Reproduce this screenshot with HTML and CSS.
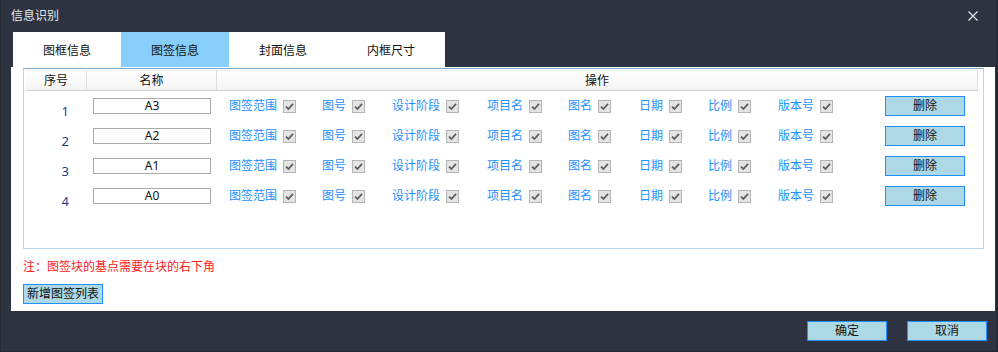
FILE: index.html
```html
<!DOCTYPE html>
<html lang="zh-CN">
<head>
<meta charset="utf-8">
<title>信息识别</title>
<link rel="stylesheet" href="styles.css">
</head>
<body>
<div class="window">
  <div class="titlebar">
    <span class="title">信息识别</span>
    <span class="close"><svg width="10" height="10" viewBox="0 0 10 10"><path d="M0.5 0.5 L9.5 9.5 M9.5 0.5 L0.5 9.5" stroke="#e4e7ec" stroke-width="1.2" fill="none"/></svg></span>
  </div>
  <div class="tabs">
    <div class="tab">图框信息</div>
    <div class="tab active">图签信息</div>
    <div class="tab">封面信息</div>
    <div class="tab">内框尺寸</div>
  </div>
  <div class="panel">
    <div class="gridbox">
      <div class="thead">
        <div class="th c-no">序号</div>
        <div class="th c-name">名称</div>
        <div class="th c-op">操作</div>
      </div>

      <div class="row">
        <div class="c-no num">1</div>
        <div class="c-name"><span class="input">A3</span></div>
        <div class="c-op ops">
          <span class="opt">图签范围<i class="cb"><svg width="13" height="13" viewBox="0 0 13 13"><path d="M3 6.6 L5.4 9 L10 3.8" stroke="#5e5e5e" stroke-width="1.8" fill="none"/></svg></i></span>
          <span class="opt">图号<i class="cb"><svg width="13" height="13" viewBox="0 0 13 13"><path d="M3 6.6 L5.4 9 L10 3.8" stroke="#5e5e5e" stroke-width="1.8" fill="none"/></svg></i></span>
          <span class="opt">设计阶段<i class="cb"><svg width="13" height="13" viewBox="0 0 13 13"><path d="M3 6.6 L5.4 9 L10 3.8" stroke="#5e5e5e" stroke-width="1.8" fill="none"/></svg></i></span>
          <span class="opt">项目名<i class="cb"><svg width="13" height="13" viewBox="0 0 13 13"><path d="M3 6.6 L5.4 9 L10 3.8" stroke="#5e5e5e" stroke-width="1.8" fill="none"/></svg></i></span>
          <span class="opt">图名<i class="cb"><svg width="13" height="13" viewBox="0 0 13 13"><path d="M3 6.6 L5.4 9 L10 3.8" stroke="#5e5e5e" stroke-width="1.8" fill="none"/></svg></i></span>
          <span class="opt">日期<i class="cb"><svg width="13" height="13" viewBox="0 0 13 13"><path d="M3 6.6 L5.4 9 L10 3.8" stroke="#5e5e5e" stroke-width="1.8" fill="none"/></svg></i></span>
          <span class="opt">比例<i class="cb"><svg width="13" height="13" viewBox="0 0 13 13"><path d="M3 6.6 L5.4 9 L10 3.8" stroke="#5e5e5e" stroke-width="1.8" fill="none"/></svg></i></span>
          <span class="opt">版本号<i class="cb"><svg width="13" height="13" viewBox="0 0 13 13"><path d="M3 6.6 L5.4 9 L10 3.8" stroke="#5e5e5e" stroke-width="1.8" fill="none"/></svg></i></span>
          <span class="btn del">删除</span>
        </div>
      </div>

      <div class="row">
        <div class="c-no num">2</div>
        <div class="c-name"><span class="input">A2</span></div>
        <div class="c-op ops">
          <span class="opt">图签范围<i class="cb"><svg width="13" height="13" viewBox="0 0 13 13"><path d="M3 6.6 L5.4 9 L10 3.8" stroke="#5e5e5e" stroke-width="1.8" fill="none"/></svg></i></span>
          <span class="opt">图号<i class="cb"><svg width="13" height="13" viewBox="0 0 13 13"><path d="M3 6.6 L5.4 9 L10 3.8" stroke="#5e5e5e" stroke-width="1.8" fill="none"/></svg></i></span>
          <span class="opt">设计阶段<i class="cb"><svg width="13" height="13" viewBox="0 0 13 13"><path d="M3 6.6 L5.4 9 L10 3.8" stroke="#5e5e5e" stroke-width="1.8" fill="none"/></svg></i></span>
          <span class="opt">项目名<i class="cb"><svg width="13" height="13" viewBox="0 0 13 13"><path d="M3 6.6 L5.4 9 L10 3.8" stroke="#5e5e5e" stroke-width="1.8" fill="none"/></svg></i></span>
          <span class="opt">图名<i class="cb"><svg width="13" height="13" viewBox="0 0 13 13"><path d="M3 6.6 L5.4 9 L10 3.8" stroke="#5e5e5e" stroke-width="1.8" fill="none"/></svg></i></span>
          <span class="opt">日期<i class="cb"><svg width="13" height="13" viewBox="0 0 13 13"><path d="M3 6.6 L5.4 9 L10 3.8" stroke="#5e5e5e" stroke-width="1.8" fill="none"/></svg></i></span>
          <span class="opt">比例<i class="cb"><svg width="13" height="13" viewBox="0 0 13 13"><path d="M3 6.6 L5.4 9 L10 3.8" stroke="#5e5e5e" stroke-width="1.8" fill="none"/></svg></i></span>
          <span class="opt">版本号<i class="cb"><svg width="13" height="13" viewBox="0 0 13 13"><path d="M3 6.6 L5.4 9 L10 3.8" stroke="#5e5e5e" stroke-width="1.8" fill="none"/></svg></i></span>
          <span class="btn del">删除</span>
        </div>
      </div>

      <div class="row">
        <div class="c-no num">3</div>
        <div class="c-name"><span class="input">A1</span></div>
        <div class="c-op ops">
          <span class="opt">图签范围<i class="cb"><svg width="13" height="13" viewBox="0 0 13 13"><path d="M3 6.6 L5.4 9 L10 3.8" stroke="#5e5e5e" stroke-width="1.8" fill="none"/></svg></i></span>
          <span class="opt">图号<i class="cb"><svg width="13" height="13" viewBox="0 0 13 13"><path d="M3 6.6 L5.4 9 L10 3.8" stroke="#5e5e5e" stroke-width="1.8" fill="none"/></svg></i></span>
          <span class="opt">设计阶段<i class="cb"><svg width="13" height="13" viewBox="0 0 13 13"><path d="M3 6.6 L5.4 9 L10 3.8" stroke="#5e5e5e" stroke-width="1.8" fill="none"/></svg></i></span>
          <span class="opt">项目名<i class="cb"><svg width="13" height="13" viewBox="0 0 13 13"><path d="M3 6.6 L5.4 9 L10 3.8" stroke="#5e5e5e" stroke-width="1.8" fill="none"/></svg></i></span>
          <span class="opt">图名<i class="cb"><svg width="13" height="13" viewBox="0 0 13 13"><path d="M3 6.6 L5.4 9 L10 3.8" stroke="#5e5e5e" stroke-width="1.8" fill="none"/></svg></i></span>
          <span class="opt">日期<i class="cb"><svg width="13" height="13" viewBox="0 0 13 13"><path d="M3 6.6 L5.4 9 L10 3.8" stroke="#5e5e5e" stroke-width="1.8" fill="none"/></svg></i></span>
          <span class="opt">比例<i class="cb"><svg width="13" height="13" viewBox="0 0 13 13"><path d="M3 6.6 L5.4 9 L10 3.8" stroke="#5e5e5e" stroke-width="1.8" fill="none"/></svg></i></span>
          <span class="opt">版本号<i class="cb"><svg width="13" height="13" viewBox="0 0 13 13"><path d="M3 6.6 L5.4 9 L10 3.8" stroke="#5e5e5e" stroke-width="1.8" fill="none"/></svg></i></span>
          <span class="btn del">删除</span>
        </div>
      </div>

      <div class="row">
        <div class="c-no num">4</div>
        <div class="c-name"><span class="input">A0</span></div>
        <div class="c-op ops">
          <span class="opt">图签范围<i class="cb"><svg width="13" height="13" viewBox="0 0 13 13"><path d="M3 6.6 L5.4 9 L10 3.8" stroke="#5e5e5e" stroke-width="1.8" fill="none"/></svg></i></span>
          <span class="opt">图号<i class="cb"><svg width="13" height="13" viewBox="0 0 13 13"><path d="M3 6.6 L5.4 9 L10 3.8" stroke="#5e5e5e" stroke-width="1.8" fill="none"/></svg></i></span>
          <span class="opt">设计阶段<i class="cb"><svg width="13" height="13" viewBox="0 0 13 13"><path d="M3 6.6 L5.4 9 L10 3.8" stroke="#5e5e5e" stroke-width="1.8" fill="none"/></svg></i></span>
          <span class="opt">项目名<i class="cb"><svg width="13" height="13" viewBox="0 0 13 13"><path d="M3 6.6 L5.4 9 L10 3.8" stroke="#5e5e5e" stroke-width="1.8" fill="none"/></svg></i></span>
          <span class="opt">图名<i class="cb"><svg width="13" height="13" viewBox="0 0 13 13"><path d="M3 6.6 L5.4 9 L10 3.8" stroke="#5e5e5e" stroke-width="1.8" fill="none"/></svg></i></span>
          <span class="opt">日期<i class="cb"><svg width="13" height="13" viewBox="0 0 13 13"><path d="M3 6.6 L5.4 9 L10 3.8" stroke="#5e5e5e" stroke-width="1.8" fill="none"/></svg></i></span>
          <span class="opt">比例<i class="cb"><svg width="13" height="13" viewBox="0 0 13 13"><path d="M3 6.6 L5.4 9 L10 3.8" stroke="#5e5e5e" stroke-width="1.8" fill="none"/></svg></i></span>
          <span class="opt">版本号<i class="cb"><svg width="13" height="13" viewBox="0 0 13 13"><path d="M3 6.6 L5.4 9 L10 3.8" stroke="#5e5e5e" stroke-width="1.8" fill="none"/></svg></i></span>
          <span class="btn del">删除</span>
        </div>
      </div>
    </div>
    <p class="note">注：图签块的基点需要在块的右下角</p>
    <span class="btn add">新增图签列表</span>
  </div>
  <div class="footer">
    <span class="btn foot">确定</span>
    <span class="btn foot">取消</span>
  </div>
</div>
</body>
</html>
```

FILE: styles.css
```css
* { box-sizing: border-box; }
html, body { margin: 0; padding: 0; }
body {
  background: #2d3340;
  font-family: "Noto Sans", "Noto Sans CJK SC", sans-serif;
  font-size: 12px;
  color: #000;
}
.window {
  width: 998px;
  height: 352px;
  background: #2d3340;
  border-left: 1px solid #262a33;
  border-right: 2px solid #262a33;
  border-bottom: 1px solid #262a33;
  overflow: hidden;
}
.titlebar {
  height: 32px;
  display: flex;
  align-items: center;
  justify-content: space-between;
  padding: 0 18px 0 10px;
}
.title {
  color: #e8eaee;
  font-size: 12px;
  line-height: 16px;
}
.close { display: flex; margin-top: 0; }
.close svg { display: block; }

.tabs {
  margin-left: 12px;
  width: 432px;
  height: 35px;
  background: #fff;
  display: flex;
}
.tab {
  width: 108px;
  display: flex;
  align-items: center;
  justify-content: center;
  color: #111;
  font-size: 12px;
}
.tab.active { background: #87cefa; }

.panel {
  margin-left: 10px;
  width: 984px;
  height: 244px;
  background: #fff;
  padding: 1px 0 0 12px;
}
.gridbox {
  width: 961px;
  height: 181px;
  border: 1px solid #b5d8f2;
  border-top-color: #7ea6cc;
  padding: 1px 5px 0 2px;
}
.thead {
  display: flex;
  height: 21px;
  background: linear-gradient(#ffffff, #f4f4f4);
  border-bottom: 1px solid #d4d4d4;
  border-right: 1px solid #dcdcdc;
  border-top: 1px solid #ececec;
}
.th {
  display: flex;
  align-items: center;
  justify-content: center;
  color: #111;
  line-height: 19px;
}
.c-no { width: 61px; flex: none; }
.c-name { width: 130px; flex: none; }
.c-op { flex: 1; }
.thead .c-no, .thead .c-name { border-right: 1px solid #dddddd; }

.row {
  display: flex;
  height: 30px;
  align-items: center;
}
.num {
  align-self: stretch;
  text-align: right;
  padding: 12px 18px 0 0;
  font-size: 13px;
  line-height: 17px;
  color: #1d3a8c;
}
.input {
  display: block;
  margin-left: 6px;
  width: 118px;
  height: 16px;
  border: 1px solid #aaaaaa;
  text-align: center;
  font-size: 12px;
  line-height: 14px;
  color: #111;
}
.ops {
  display: grid;
  grid-template-columns: 93px 70px 95px 81px 71px 69px 70px 107px 80px;
  align-items: center;
  padding-left: 12px;
}
.opt {
  display: flex;
  align-items: center;
  color: #1e90ff;
  line-height: 16px;
  white-space: nowrap;
}
.cb {
  display: block;
  width: 13px;
  height: 13px;
  margin-left: 6px;
  background: #e4e4e4;
  border: 1px solid #b4b4b4;
  position: relative;
}
.cb svg { display: block; margin: -1px 0 0 -1px; }

.btn {
  display: flex;
  align-items: center;
  justify-content: center;
  width: 80px;
  height: 20px;
  background: #add8e6;
  border: 1px solid #1e90ff;
  color: #111;
  font-size: 12px;
  line-height: 16px;
}
.note {
  margin: 10px 0 0 0;
  color: #ff1a1a;
  font-size: 12px;
  line-height: 16px;
}
.btn.add { margin-top: 9px; }

.footer {
  display: flex;
  justify-content: flex-end;
  gap: 20px;
  padding: 10px 9px 0 0;
}
```
